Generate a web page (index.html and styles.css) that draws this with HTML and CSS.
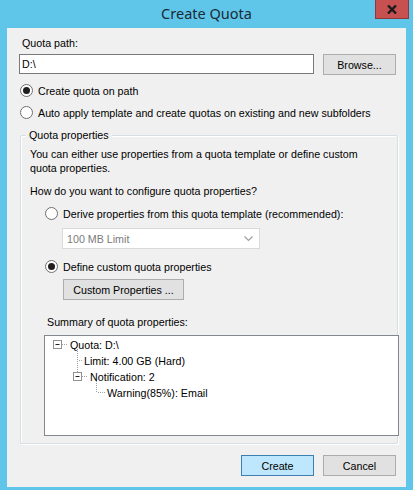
FILE: index.html
```html
<!DOCTYPE html>
<html>
<head>
<meta charset="utf-8">
<link rel="stylesheet" href="styles.css">
</head>
<body>
<div class="window">
  <div class="titlebar">
    <span class="title">Create Quota</span>
    <div class="close"><svg width="10" height="9" viewBox="0 0 10 9"><path d="M1 0.5 L9 8.5 M9 0.5 L1 8.5" stroke="#1b1b1b" stroke-width="2.4"/></svg></div>
  </div>
  <div class="content">
    <div class="label">Quota path:</div>
    <div class="path-row">
      <div class="textbox">D:\</div>
      <div class="btn">Browse...</div>
    </div>
    <div class="radio-row r1"><span class="radio checked"></span><span>Create quota on path</span></div>
    <div class="radio-row r2"><span class="radio"></span><span>Auto apply template and create quotas on existing and new subfolders</span></div>
    <div class="group">
      <div class="legend">Quota properties</div>
      <div class="desc">You can either use properties from a quota template or define custom quota properties.</div>
      <div class="question">How do you want to configure quota properties?</div>
      <div class="radio-row r3"><span class="radio"></span><span>Derive properties from this quota template (recommended):</span></div>
      <div class="select"><span>100 MB Limit</span><svg width="9" height="6" viewBox="0 0 9 6"><path d="M0.5 0.5 L4.5 4.5 L8.5 0.5" fill="none" stroke="#a0a0a0" stroke-width="1.2"/></svg></div>
      <div class="radio-row r4"><span class="radio checked"></span><span>Define custom quota properties</span></div>
      <div class="btn custom">Custom Properties ...</div>
      <div class="summary-label">Summary of quota properties:</div>
      <div class="tree">
        <div class="node">
          <svg class="conn" width="25" height="16" viewBox="0 0 25 16"><rect x="8.5" y="3.5" width="8" height="8" fill="#fff" stroke="#919191"/><path d="M10.5 7.5 H14.5" stroke="#222"/><path d="M17 7.5 H23" stroke="#a0a0a0" stroke-dasharray="1 1"/><path d="M32.5 12 V16" stroke="#a0a0a0" stroke-dasharray="1 1"/></svg>
          <span>Quota: D:\</span>
        </div>
        <div class="node">
          <svg class="conn" width="39" height="16" viewBox="0 0 39 16"><path d="M32.5 0 V16" stroke="#a0a0a0" stroke-dasharray="1 1"/><path d="M34 7.5 H38" stroke="#a0a0a0" stroke-dasharray="1 1"/></svg>
          <span>Limit: 4.00 GB (Hard)</span>
        </div>
        <div class="node">
          <svg class="conn" width="45" height="16" viewBox="0 0 45 16"><path d="M32.5 0 V3" stroke="#a0a0a0" stroke-dasharray="1 1"/><rect x="28.5" y="3.5" width="8" height="8" fill="#fff" stroke="#919191"/><path d="M30.5 7.5 H34.5" stroke="#222"/><path d="M37 7.5 H43" stroke="#a0a0a0" stroke-dasharray="1 1"/><path d="M51.5 12 V16" stroke="#a0a0a0" stroke-dasharray="1 1"/></svg>
          <span>Notification: 2</span>
        </div>
        <div class="node">
          <svg class="conn" width="62" height="16" viewBox="0 0 62 16"><path d="M51.5 0 V7" stroke="#a0a0a0" stroke-dasharray="1 1"/><path d="M53 7.5 H61" stroke="#a0a0a0" stroke-dasharray="1 1"/></svg>
          <span>Warning(85%): Email</span>
        </div>
      </div>
    </div>
    <div class="actions">
      <div class="btn default">Create</div>
      <div class="btn">Cancel</div>
    </div>
  </div>
</div>
</body>
</html>
```
FILE: styles.css
```css
* { box-sizing: border-box; }
html, body { margin: 0; padding: 0; }
body {
  width: 413px; height: 490px; overflow: hidden;
  font-family: "Liberation Sans", Arial, sans-serif;
  font-size: 10.7px; color: #000;
}
.window {
  width: 413px; height: 490px;
  background: #5fc6e9;
  display: flex; flex-direction: column;
  padding: 0 7px 3px 7px;
}
.titlebar {
  position: relative;
  height: 28px;
  display: flex; align-items: center; justify-content: center;
}
.title {
  font-family: "Noto Sans", "Liberation Sans", sans-serif;
  font-size: 14.5px; color: #1b2a36; margin-top: -2px;
}
.close {
  position: absolute; right: -3px; top: 0;
  width: 34px; height: 19px;
  background: #c75050; border: 1px solid #8a3a3a; border-top: none;
  display: flex; align-items: center; justify-content: center;
}
.content {
  flex: 1;
  background: #f0f0f0;
  padding: 8px 10px 0 12px;
  display: flex; flex-direction: column;
}
.label { height: 18px; line-height: 14px; padding-left: 3px; }
.path-row { display: flex; gap: 9px; height: 21px; }
.textbox {
  width: 297px; height: 20px;
  background: #fff; border: 1px solid #7a7a7a;
  padding: 2px 0 0 2px; line-height: 14px;
}
.btn {
  height: 21px; width: 73px;
  background: #e1e1e1; border: 1px solid #adadad;
  display: flex; align-items: center; justify-content: center;
  flex: none;
}
.radio-row { display: flex; align-items: center; gap: 5px; height: 13px; }
.r1 { margin-top: 9px; margin-left: 1px; }
.r2 { margin-top: 9px; margin-left: 1px; }
.radio {
  width: 13px; height: 13px; border-radius: 50%;
  border: 1px solid #6f6f6f; background: #fff;
  display: inline-flex; align-items: center; justify-content: center;
  flex: none;
}
.radio.checked::after {
  content: ""; width: 7px; height: 7px; border-radius: 50%; background: #1e1e1e;
}
.group {
  position: relative;
  margin-top: 16px; margin-left: 1px;
  width: 378px; height: 309px;
  border: 1px solid #d5dfe5;
  border-radius: 2px;
  box-shadow: inset 1px 1px 0 #fff, 1px 1px 0 #fff;
  padding: 11px 0 0 9px;
  display: flex; flex-direction: column;
}
.legend {
  position: absolute; top: -8px; left: 5px;
  background: #f0f0f0; padding: 0 3px; line-height: 14px;
}
.desc { line-height: 14px; width: 345px; }
.question { margin-top: 9px; line-height: 14px; }
.r3 { margin-top: 9px; margin-left: 15px; }
.select {
  margin-top: 8px; margin-left: 32px;
  width: 198px; height: 21px;
  background: #fff; border: 1px solid #d9d9d9;
  display: flex; align-items: center; justify-content: space-between;
  padding: 0 6px 0 4px; color: #7a7a7a;
}
.r4 { margin-top: 11px; margin-left: 15px; }
.btn.custom { width: 121px; margin-top: 6px; margin-left: 33px; }
.summary-label { margin-top: 15px; margin-left: 17px; line-height: 14px; }
.tree {
  margin-top: 6px; margin-left: 14px;
  width: 355px; height: 101px;
  background: #fff; border: 1px solid #828790;
  padding: 1px 0 0 0;
}
.node { display: flex; align-items: center; height: 16px; }
.conn { flex: none; overflow: visible; }
.actions {
  display: flex; justify-content: flex-end; gap: 9px;
  margin-top: 11px;
}
.btn.default { background: #bee6fd; border-color: #3c7fb1; }
```
